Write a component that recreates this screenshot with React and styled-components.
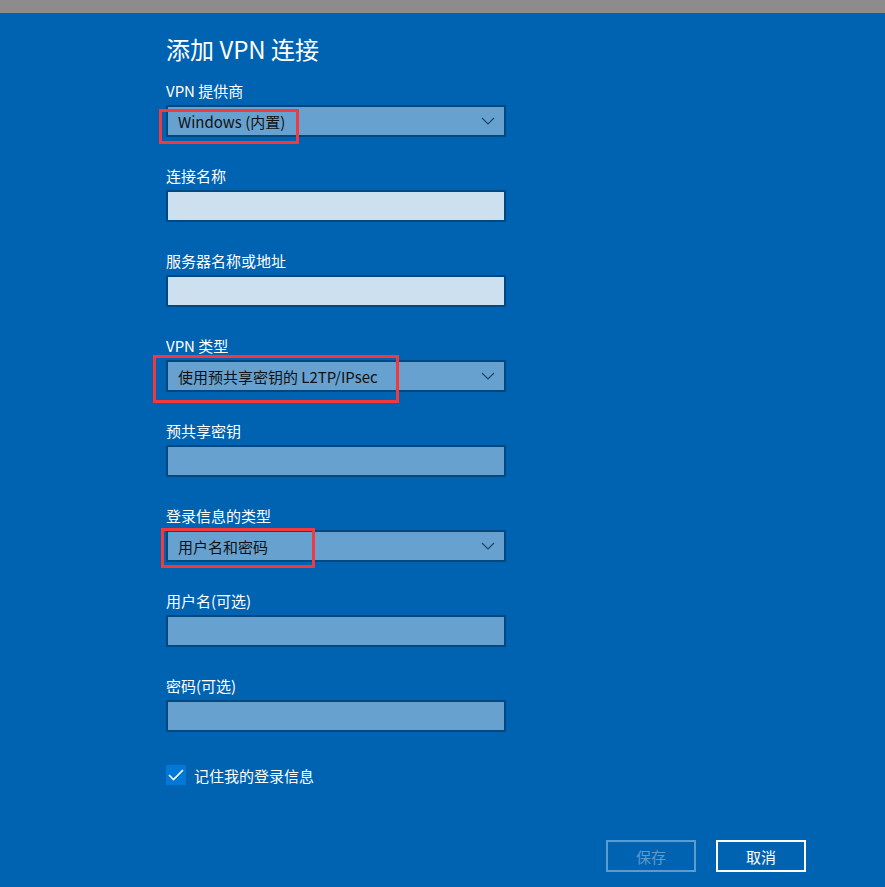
import React from 'react';
import styled, { createGlobalStyle } from 'styled-components';

const GlobalStyle = createGlobalStyle`
    html, body {
        margin: 0;
        padding: 0;
        background: #0063b1;
    }
    body {
        font-family: "Noto Sans CJK SC", "Noto Sans", sans-serif;
        color: #fff;
    }
`;

const Styled = {
    Page: styled.div`
        width: 885px;
        height: 887px;
        background: #0063b1;
        overflow: hidden;
    `,
    TopBar: styled.div`
        height: 13px;
        background: #8c8c8c;
    `,
    Content: styled.div`
        padding-left: 166px;
        width: 640px;
    `,
    Title: styled.h1`
        margin: 0;
        padding-top: 20px;
        height: 32px;
        line-height: 32px;
        font-size: 24px;
        font-weight: 400;
        color: #fff;
    `,
    Fields: styled.div`
        margin-top: 16px;
        display: flex;
        flex-direction: column;
        gap: 29px;
    `,
    Field: styled.div`
        display: flex;
        flex-direction: column;
        gap: 4px;
        width: 340px;
    `,
    Label: styled.div`
        height: 20px;
        line-height: 20px;
        font-size: 15px;
        color: #fff;
    `,
    Box: styled.div`
        position: relative;
        box-sizing: border-box;
        height: 32px;
        border: 2px solid #00487f;
        background: ${({ light }) => (light ? '#cce0ef' : '#66a1d0')};
        display: flex;
        align-items: center;
        justify-content: space-between;
        padding: 0 9px 0 10px;
        font-size: 15px;
        color: #111;
    `,
    Chevron: styled.svg`
        width: 14px;
        height: 8px;
        fill: none;
        stroke: #1d4466;
        stroke-width: 1.1;
    `,
    Mark: styled.div`
        position: absolute;
        box-sizing: border-box;
        border: 3px solid #f3393b;
        pointer-events: none;
    `,
    CheckRow: styled.label`
        margin-top: 33px;
        display: flex;
        align-items: center;
        gap: 8px;
        font-size: 15px;
        height: 20px;
    `,
    CheckBox: styled.span`
        width: 20px;
        height: 20px;
        background: #0078d7;
        display: flex;
        align-items: center;
        justify-content: center;
    `,
    Buttons: styled.div`
        margin-top: 55px;
        display: flex;
        justify-content: flex-end;
        gap: 20px;
    `,
    Button: styled.button`
        box-sizing: border-box;
        width: 90px;
        height: 32px;
        background: transparent;
        border: 2px solid ${({ disabled }) => (disabled ? '#5c9bcf' : '#fff')};
        color: ${({ disabled }) => (disabled ? '#5c9bcf' : '#fff')};
        font-family: inherit;
        font-size: 15px;
        padding: 0;
    `,
};

const chevron = (
    <Styled.Chevron viewBox="0 0 14 8">
        <path d="M1 1 L7 7 L13 1" />
    </Styled.Chevron>
);

const fields = [
    { label: 'VPN 提供商', value: 'Windows (内置)', select: true, mark: { left: -9, top: 2, width: 140, height: 35 } },
    { label: '连接名称', light: true },
    { label: '服务器名称或地址', light: true },
    { label: 'VPN 类型', value: '使用预共享密钥的 L2TP/IPsec', select: true, mark: { left: -15, top: -7, width: 246, height: 48 } },
    { label: '预共享密钥' },
    { label: '登录信息的类型', value: '用户名和密码', select: true, mark: { left: -7, top: -4, width: 154, height: 40 } },
    { label: '用户名(可选)' },
    { label: '密码(可选)' },
];

function App() {
    return (
        <Styled.Page>
            <GlobalStyle />
            <Styled.TopBar />
            <Styled.Content>
                <Styled.Title>添加 VPN 连接</Styled.Title>
                <Styled.Fields>
                    {fields.map((f) => (
                        <Styled.Field key={f.label}>
                            <Styled.Label>{f.label}</Styled.Label>
                            <Styled.Box light={f.light}>
                                <span>{f.value}</span>
                                {f.select && chevron}
                                {f.mark && <Styled.Mark style={f.mark} />}
                            </Styled.Box>
                        </Styled.Field>
                    ))}
                </Styled.Fields>
                <Styled.CheckRow>
                    <Styled.CheckBox>
                        <svg width="16" height="12" viewBox="0 0 16 12">
                            <path d="M1 6 L5.5 10.5 L15 1" fill="none" stroke="#fff" strokeWidth="1.6" />
                        </svg>
                    </Styled.CheckBox>
                    记住我的登录信息
                </Styled.CheckRow>
                <Styled.Buttons>
                    <Styled.Button disabled>保存</Styled.Button>
                    <Styled.Button>取消</Styled.Button>
                </Styled.Buttons>
            </Styled.Content>
        </Styled.Page>
    );
}

export default App;
